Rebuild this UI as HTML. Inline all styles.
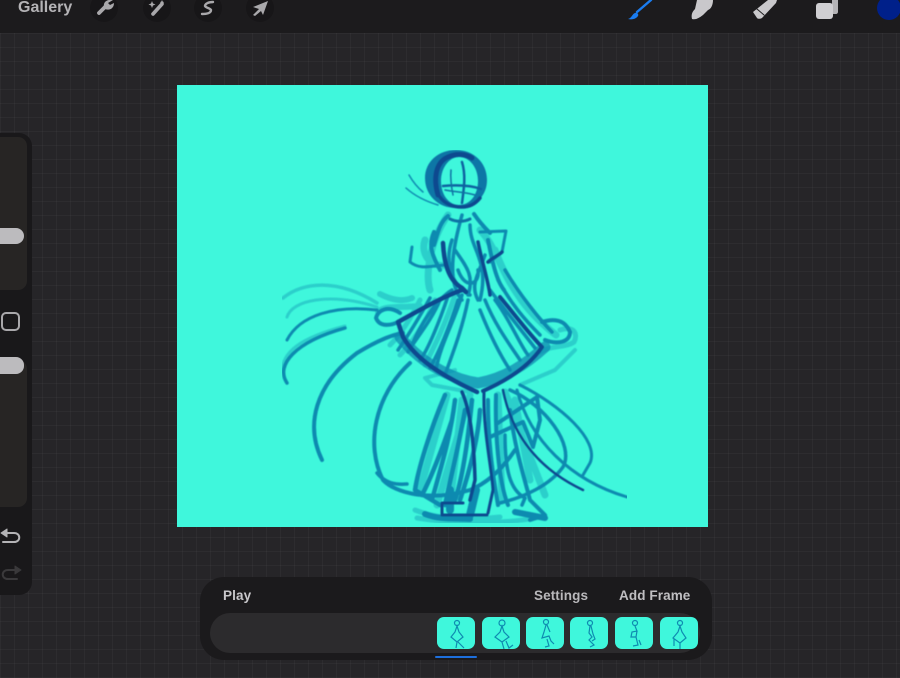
<!DOCTYPE html>
<html>
<head>
<meta charset="utf-8">
<style>
html,body{margin:0;padding:0}
body{width:900px;height:678px;overflow:hidden;position:relative;background-color:#262528;font-family:"Liberation Sans",sans-serif;
background-image:repeating-linear-gradient(90deg,rgba(255,255,255,.03) 0 1px,transparent 1px 14px),repeating-linear-gradient(0deg,rgba(255,255,255,.03) 0 1px,transparent 1px 14px)}
.top{position:absolute;left:0;top:0;width:900px;height:33px;background:#1c1b1d}
.gal{position:absolute;left:18px;top:-2px;font-size:16px;line-height:20px;font-weight:bold;color:#b4b3b6}
.canvas{position:absolute;left:177px;top:85px;width:531px;height:442px;background:#3ff7dc}
.side{position:absolute;left:-20px;top:133px;width:52px;height:462px;border-radius:13px;background:#19181a}
.sl{position:absolute;width:27px;background:#272524;border-radius:0 9px 9px 0}
.hd{position:absolute;width:24px;background:#bcbbbe;border-radius:0 8px 8px 0}
.sq{position:absolute;left:1px;top:312px;width:15px;height:15px;border:2px solid #a9a8ab;border-radius:5px}
.panel{position:absolute;left:200px;top:577px;width:512px;height:83px;border-radius:24px;background:#1b1a1c}
.track{position:absolute;left:210px;top:613px;width:490px;height:40px;border-radius:20px;background:#2c2b2d}
.lbl{position:absolute;top:587px;font-size:13.5px;line-height:18px;font-weight:bold;color:#c9c8cb;letter-spacing:.1px}
.th{position:absolute;top:617px;width:38px;height:32px;border-radius:7px;background:#3ff7dc;overflow:hidden}
.th svg{display:block}
.ul{position:absolute;left:435px;top:656px;width:42px;height:2px;background:#1d6fdc;border-radius:1px}
svg.ov{position:absolute;left:0;top:0}
</style>
</head>
<body>
<div class="top"></div>
<div class="gal">Gallery</div>
<div class="canvas"></div>

<svg class="ov" width="900" height="678" viewBox="0 0 900 678" fill="none" stroke-linecap="round" stroke-linejoin="round">
  <defs><filter id="b" x="0" y="0" width="100%" height="100%"><feGaussianBlur stdDeviation=".6"/></filter></defs>
  <!-- top circles -->
  <circle cx="104" cy="8" r="14" fill="#171618"/>
  <circle cx="157" cy="8" r="14" fill="#171618"/>
  <circle cx="208" cy="8" r="14" fill="#171618"/>
  <circle cx="260" cy="8" r="14" fill="#171618"/>
  <!-- wrench -->
  <path d="M99 13 L106 6" stroke="#a9a8ab" stroke-width="3.800"/>
  <path d="M104 7 C103 2 107 -1 113 0 L108 3 L110 5 L114 3 C114 8 110 11 105 9Z" fill="#a9a8ab"/>
  <!-- wand -->
  <path d="M153 14 L162 4" stroke="#a9a8ab" stroke-width="3.600"/>
  <path d="M152 1 l1 2.500 2.500 1 -2.500 1 -1 2.500 -1-2.500 -2.500-1 2.500-1z M162 0 l.7 1.500 1.500 .7 -1.500 .7 -.7 1.500 -.7-1.500 -1.500-.7 1.500-.7z" fill="#a9a8ab"/>
  <!-- s -->
  <path d="M213 2 C208 2 205 4 205 6 C206 8 210 8 211 10 C211 13 207 14 202 14" stroke="#a9a8ab" stroke-width="2.400"/>
  <!-- arrow -->
  <path d="M268 1 L253 7 L259 9 L253 15 L255 16 L261 11 L263 15Z" fill="#a9a8ab"/>
  <!-- brush -->
  <path d="M651 0 L637 12" stroke="#1a7cf0" stroke-width="2.400"/>
  <path d="M628 19 C632 18 632 14 635 13 C637 12 639 14 638 16 C636 19 632 20 628 19Z" fill="#1a7cf0"/>
  <!-- smudge -->
  <path d="M697 0 L713 0 C713 5 711 9 708 10 L703 15 C699 18 696 20 692 19 C691 15 692 12 695 9Z" fill="#c9c8cb"/>
  <!-- eraser -->
  <path d="M753 12 L768 0 L777 0 L776 3 L762 18 C760 19 758 19 757 18Z" fill="#c9c8cb"/>
  <path d="M757 9 L764 15" stroke="#1c1b1d" stroke-width="1"/>
  <!-- layers -->
  <path d="M832 0 H838 V12 C838 13 837 14 836 14 H832Z" fill="#b4b3b6"/>
  <rect x="816" y="3" width="17" height="16" rx="3" fill="#d0cfd2"/>
  <!-- colour -->
  <circle cx="889" cy="8" r="12" fill="#00208a"/>

  <g filter="url(#b)">
  <!-- lightest layer -->
  <g stroke="#1fb5c0" opacity=".6">
    <path stroke-width="3.500" d="M283 298 C303 282 337 278 377 303"/>
    <path stroke-width="3" d="M287 317 C292 300 330 292 377 307"/>
    <path stroke-width="3" d="M282 372 C282 352 300 338 345 326"/>
    <path stroke-width="6" d="M380 294 C392 300 402 302 412 298 M378 312 C385 305 400 308 420 306"/>
    <path stroke-width="5" d="M560 330 C575 325 578 335 574 342 C565 348 552 345 540 352"/>
    <path stroke-width="4" d="M575 350 L555 370 L520 385 M455 370 L425 378 L432 385 L470 392"/>
    <path stroke-width="7" d="M447 395 L420 490 M470 395 L437 505 M462 400 L450 505 M498 395 L502 500 M505 392 L545 495 M515 400 L530 480"/>
    <path stroke-width="5" d="M415 510 C440 520 470 520 500 517 M417 518 C460 525 510 524 545 516"/>
    <path stroke-width="7" d="M425 240 C420 255 432 268 445 265 M480 230 C495 245 500 270 518 295 M448 215 C430 240 425 275 430 290 M495 250 C510 290 530 315 556 335"/>
    <path stroke-width="5" d="M420 300 C410 320 400 335 390 345 M435 300 C425 325 410 345 400 355 M455 295 C445 325 435 345 425 365"/>
  </g>

  <!-- mid layer -->
  <g stroke="#0e8ab0">
    <path stroke-width="3" d="M287 340 C300 315 335 305 377 310"/>
    <path stroke-width="3.500" d="M287 383 C275 365 295 342 345 328"/>
    <path stroke-width="4" d="M322 460 C305 425 315 385 357 353 C375 342 390 335 403 333"/>
    <path stroke-width="4" d="M410 363 C375 395 365 445 383 480 C395 493 430 502 470 490 C490 482 505 465 515 450"/>
    <path stroke-width="3.500" d="M377 473 C385 483 395 485 407 484"/>
    <path stroke-width="3" d="M520 385 C560 405 600 440 590 463 L583 475"/>
    <path stroke-width="3" d="M517 390 C530 440 570 480 627 497"/>
    <path stroke-width="3.500" d="M510 390 C545 405 575 445 563 467 C550 485 525 497 500 503"/>
    <path stroke-width="4" d="M498 423 L537 397 L540 420 L533 447 L523 422 L490 437"/>
    <path stroke-width="1.500" d="M409 175 C413 182 417 187 423 192 M406 188 C416 197 428 202 438 205"/>
    <path stroke-width="4" d="M400 313 C388 305 378 310 376 318 C380 328 392 325 398 322"/>
    <path stroke-width="4" d="M542 322 C555 318 565 320 570 332 C570 342 558 345 545 340"/>
    <path stroke-width="3.500" d="M430 298 C415 325 405 340 398 350 M440 300 C432 320 415 340 408 352 M448 296 C440 320 428 350 420 360 M458 300 C450 325 440 350 430 368 M452 290 C436 300 420 325 412 345 M462 295 C455 320 440 345 436 370 M468 300 C462 330 452 355 446 372"/>
    <path stroke-width="3.500" d="M490 290 C505 310 525 335 535 348 M498 280 C512 305 525 320 540 335 M505 270 C520 295 540 320 552 332 M485 300 C495 325 510 345 520 360 M480 310 C490 335 500 355 510 370 M495 300 C510 320 520 345 528 355"/>
    <path stroke-width="3.500" d="M462 215 C455 240 445 280 462 300 M470 225 C470 250 490 260 480 300 M455 250 C465 265 475 275 468 295 M452 240 C445 260 450 285 470 295 M458 270 C465 290 480 285 478 270 M485 255 C478 275 470 285 478 300"/>
    <path stroke-width="3" d="M412 247 L410 262 C420 270 430 266 445 265 M480 232 L506 231 L502 252 L490 262"/>
    <path stroke-width="4" d="M434 245 C438 232 440 222 448 216 M490 233 C482 225 478 220 474 214 M440 270 C432 255 428 245 434 232 M488 240 C492 260 496 280 504 290"/>
    <path stroke-width="4.500" d="M445 395 C430 430 418 470 415 490 L440 505 M455 400 C450 440 440 470 432 500 M465 410 C458 450 450 480 445 505 M480 410 C478 440 470 470 460 500 M452 420 C442 450 430 480 422 495 M472 400 C468 440 462 480 455 500"/>
    <path stroke-width="4" d="M496 395 C495 430 498 480 508 505 M510 410 C515 450 525 480 530 500 L545 515 L530 520 M488 400 C488 440 492 470 498 505"/>
    <path stroke-width="3.500" d="M505 435 C505 470 510 490 525 498 L522 505"/>
    <path stroke-width="8" d="M450 490 L450 510 M476 490 L470 515"/>
    <path stroke-width="6" d="M515 512 L545 518 M425 514 C440 520 455 518 470 519"/>
    <path stroke-width="11" opacity=".75" d="M400 337 C425 368 458 380 478 383 C505 378 525 365 545 347"/>
    <!-- head ring -->
    <path fill="#0f76a6" stroke="none" fill-rule="evenodd" d="M456 150 C474 150 487 163 487 180 C487 197 474 208 456 208 C438 208 425 195 425 178 C425 162 438 150 456 150Z M459 157 C449 157 441 168 441 181 C441 195 449 205 459 205 C470 205 478 195 478 181 C478 168 470 157 459 157Z"/>
  </g>

  <!-- dark layer -->
  <g stroke="#10498f">
    <path stroke-width="5" d="M438 195 C433 178 436 162 448 157 C456 153 466 154 472 158"/>
    <path stroke-width="3.500" d="M440 197 C445 204 452 207 462 207 C470 207 476 203 480 198"/>
    <path stroke-width="2.500" d="M443 186 C455 185 470 185 481 189 M462 203 C464 188 466 175 462 162" stroke="#0f62a0"/>
    <path stroke-width="1.500" d="M451 170 C450 180 452 190 453 195 M445 190 C455 192 465 192 475 195" stroke="#0f72a4"/>
    <path stroke-width="4.500" d="M443 243 C444 262 448 280 462 288 L466 292"/>
    <path stroke-width="3.500" d="M478 242 C482 262 488 280 490 295"/>
    <path stroke-width="4.500" d="M462 290 C440 298 420 310 398 322 L403 337 C415 358 440 375 477 392"/>
    <path stroke-width="4" d="M500 297 C515 315 530 335 542 347 C530 365 508 380 483 391"/>
    <path stroke-width="3.500" d="M488 262 C492 258 498 256 502 252"/>
    <path stroke-width="3.500" d="M462 392 C470 410 474 440 475 480 L470 500"/>
    <path stroke-width="3" d="M484 393 C483 430 492 470 493 490 L488 513"/>
    <path stroke-width="3" d="M463 503 H442 L442 515 H487"/>
    <path stroke-width="2.500" d="M503 390 C510 425 530 465 583 490"/>
    <path stroke-width="3" d="M450 219 C456 222 464 222 470 219" stroke="#0f72a4"/>
  </g>
  </g>
</svg>

<div class="side">
  <div class="sl" style="left:20px;top:4px;height:153px"></div>
  <div class="sl" style="left:20px;top:227px;height:147px"></div>
  <div class="hd" style="left:20px;top:95px;height:16px"></div>
  <div class="hd" style="left:20px;top:224px;height:17px"></div>
</div>
<div class="sq"></div>
<svg class="ov" width="40" height="600" viewBox="0 0 40 600" fill="none" stroke-linecap="round" stroke-linejoin="round">
  <path d="M3 533 H14 C21 533 21 542 14 542 H3" stroke="#b4b3b6" stroke-width="2"/>
  <path d="M7 529 L1 533 L7 537Z" fill="#b4b3b6" stroke="#b4b3b6"/>
  <path d="M18 570 H8 C1 570 1 579 8 579 H17" stroke="#3a393b" stroke-width="2"/>
  <path d="M15 566 L21 570 L15 574Z" fill="#3a393b" stroke="#3a393b"/>
</svg>

<div class="panel"></div>
<div class="track"></div>
<div class="lbl" style="left:223px">Play</div>
<div class="lbl" style="left:534px;color:#b9b8bb">Settings</div>
<div class="lbl" style="left:619px;color:#c0bfc2">Add Frame</div>

<div class="th" style="left:437px"><svg width="38" height="32" fill="none" stroke="#0f8bb0" stroke-width="1.200"><circle cx="20" cy="6" r="2.500"/><path d="M20 9 L22 15 L26 20 L20 25 L14 20 L18 15Z M20 25 L19 31 M21 25 L27 31"/></svg></div>
<div class="th" style="left:482px"><svg width="38" height="32" fill="none" stroke="#0f8bb0" stroke-width="1.200"><circle cx="20" cy="6" r="3"/><path d="M20 9 L22 15 L27 20 L20 25 L13 20 L18 15Z M20 25 L22 32 M24 24 L27 31 L31 28"/></svg></div>
<div class="th" style="left:526px"><svg width="38" height="32" fill="none" stroke="#0f8bb0" stroke-width="1.200"><circle cx="20" cy="5" r="2.500"/><path d="M20 8 L18 15 L16 21 L23 19 L25 24 L28 27 M21 8 L24 15 M21 22 L23 29 L19 30"/></svg></div>
<div class="th" style="left:570px"><svg width="38" height="32" fill="none" stroke="#0f8bb0" stroke-width="1.200"><circle cx="20" cy="6" r="2.500"/><path d="M20 9 L19 16 L22 20 L19 23 L24 28 L20 30 M21 9 L23 17 L25 22 L22 24"/></svg></div>
<div class="th" style="left:615px"><svg width="38" height="32" fill="none" stroke="#0f8bb0" stroke-width="1.200"><circle cx="20" cy="6" r="2.500"/><path d="M20 9 L22 14 L17 15 L16 20 L21 20 L23 28 L18 29 M24 23 L26 28 M22 14 L21 20"/></svg></div>
<div class="th" style="left:660px"><svg width="38" height="32" fill="none" stroke="#0f8bb0" stroke-width="1.200"><circle cx="20" cy="6" r="2.500"/><path d="M20 9 L18 15 L13 21 L20 26 L26 21 L22 15 Z M20 26 L20 32 M14 22 L14 29"/></svg></div>
<div class="ul"></div>
</body>
</html>
